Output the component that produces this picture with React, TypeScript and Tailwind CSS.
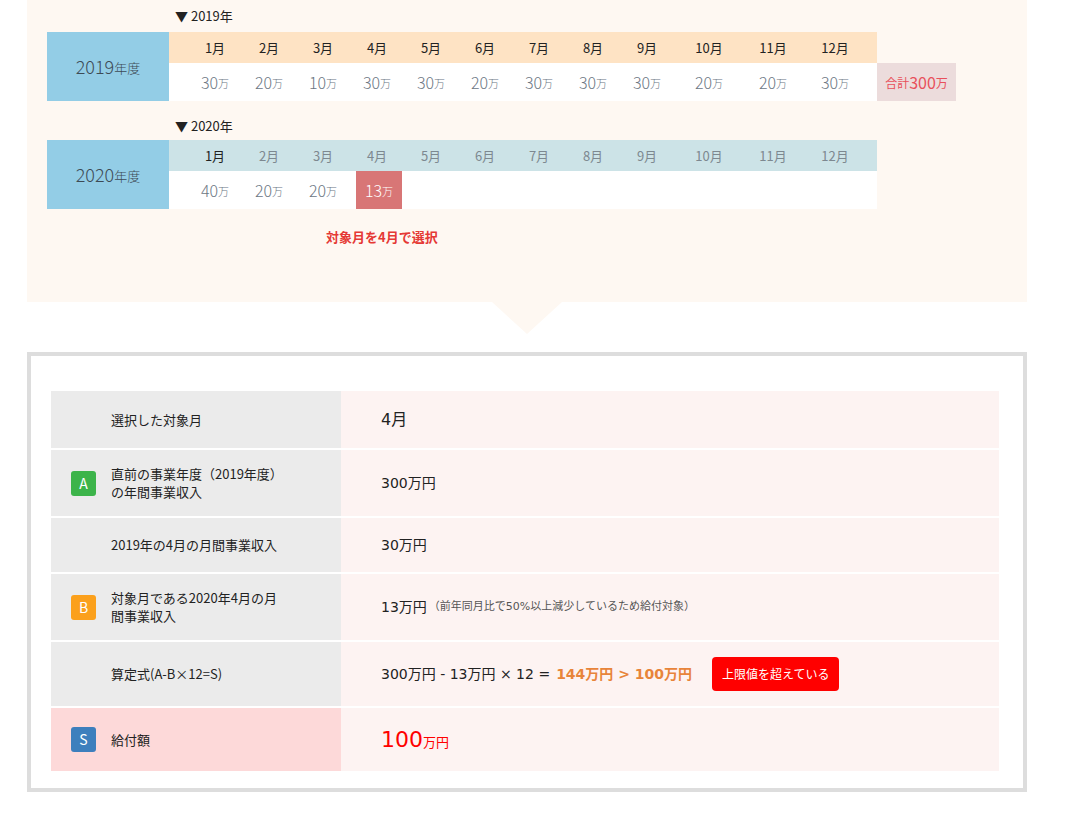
const MONTHS = ["1月", "2月", "3月", "4月", "5月", "6月", "7月", "8月", "9月", "10月", "11月", "12月"];
const COLS = "grid-cols-[54px_54px_54px_54px_54px_54px_54px_54px_54px_70px_58px_66px]";

function YearTable({
  year,
  values,
  head,
  current,
}: {
  year: string;
  values: string[];
  head: string;
  current?: boolean;
}) {
  return (
    <div className="flex">
      <div className="w-[122px] bg-[#93cde6] flex items-center justify-center text-[#3d4a55] font-light">
        <span className="text-[18px]">{year}</span>
        <span className="text-[13px] mt-[3px]">年度</span>
      </div>
      <div className="w-[708px]">
        <div className={`h-[31px] ${head} pl-[19px] grid ${COLS} items-center text-[13px]`}>
          {MONTHS.map((m, i) => (
            <div key={m} className={`text-center ${current && i > 0 ? "text-[#7d8890]" : "text-[#222]"}`}>
              {m}
            </div>
          ))}
        </div>
        <div className={`h-[38px] bg-white pl-[19px] grid ${COLS} items-stretch font-light`}>
          {values.map((v, i) =>
            current && i === 3 ? (
              <div key={i} className="flex justify-center">
                <div className="w-[46px] bg-[#d87676] text-white flex items-center justify-center ml-[4px]">
                  <span className="text-[16px]">{v}</span>
                  <span className="text-[11px] mt-[3px]">万</span>
                </div>
              </div>
            ) : (
              <div key={i} className="flex items-center justify-center text-[#6b7683]">
                <span className="text-[16px]">{v}</span>
                <span className="text-[11px] mt-[3px]">万</span>
              </div>
            )
          )}
        </div>
      </div>
    </div>
  );
}

function Badge({ letter, color }: { letter: string; color: string }) {
  return (
    <div className={`w-[25px] h-[25px] rounded-[3px] ${color} text-white text-[14px] flex items-center justify-center`}>
      {letter}
    </div>
  );
}

function Row({
  h,
  badge,
  label,
  children,
  leftBg = "bg-[#ebebeb]",
}: {
  h: string;
  badge?: React.ReactNode;
  label: React.ReactNode;
  children: React.ReactNode;
  leftBg?: string;
}) {
  return (
    <div className={`flex ${h}`}>
      <div className={`w-[290px] ${leftBg} flex items-center pl-[20px]`}>
        <div className="w-[40px] shrink-0">{badge}</div>
        <div className="text-[13px] leading-[18px] text-[#222]">{label}</div>
      </div>
      <div
        className="flex-1 bg-[#fdf3f2] flex items-center pl-[40px] text-[14px] text-[#222]"
        style={{ fontFamily: '"DejaVu Sans", "Noto Sans CJK JP", sans-serif' }}
      >
        {children}
      </div>
    </div>
  );
}

export default function App() {
  return (
    <div className="w-[1065px] bg-white pb-[21px]" style={{ fontFamily: '"Noto Sans CJK JP", "Noto Sans", sans-serif' }}>
      <div className="ml-[27px] w-[1000px] h-[302px] bg-[#fef8f2] pl-[20px] pt-[6px]">
        <div className="pl-[128px] text-[13px] text-[#222] h-[26px]">▼ 2019年</div>
        <div className="flex">
          <YearTable year="2019" values={["30", "20", "10", "30", "30", "20", "30", "30", "30", "20", "20", "30"]} head="bg-[#fee3c4]" />
          <div className="self-end h-[38px] w-[79px] bg-[#ecdcdc] text-[#e8505b] flex items-center justify-center">
            <span className="text-[12px] mt-[2px]">合計</span>
            <span className="text-[16px]">300</span>
            <span className="text-[12px] mt-[2px]">万</span>
          </div>
        </div>
        <div className="pl-[128px] text-[13px] text-[#222] mt-[15px] h-[24px]">▼ 2020年</div>
        <YearTable year="2020" values={["40", "20", "20", "13"]} head="bg-[#cce3e7]" current />
        <div className="pl-[279px] mt-[18px] text-[13px] font-bold text-[#e53935]">対象月を4月で選択</div>
      </div>
      <div className="flex justify-center w-[1000px] ml-[27px]">
        <div className="w-0 h-0 border-l-[35px] border-r-[35px] border-t-[32px] border-l-transparent border-r-transparent border-t-[#fef8f2]" />
      </div>
      <div className="ml-[27px] mt-[18px] w-[1000px] border-4 border-[#dddddd] pl-[20px] pr-[24px] pt-[35px] pb-[17px]">
        <div className="flex flex-col gap-[2px]">
          <Row h="h-[57px]" label="選択した対象月">
            <span className="text-[16px]">4月</span>
          </Row>
          <Row h="h-[66px]" badge={<Badge letter="A" color="bg-[#3cb44a]" />} label={<>直前の事業年度（2019年度）<br />の年間事業収入</>}>
            300万円
          </Row>
          <Row h="h-[54px]" label="2019年の4月の月間事業収入">
            30万円
          </Row>
          <Row h="h-[66px]" badge={<Badge letter="B" color="bg-[#fba01b]" />} label={<>対象月である2020年4月の月<br />間事業収入</>}>
            13万円
            <span className="text-[11px] text-[#555] ml-[2px]">（前年同月比で50%以上減少しているため給付対象）</span>
          </Row>
          <Row h="h-[64px]" label="算定式(A-B×12=S)">
            300万円 - 13万円 × 12 =
            <span className="ml-[6px] font-bold text-[#e8843a]">144万円 &gt; 100万円</span>
            <span className="ml-[20px] bg-[#ff0000] text-white text-[12px] rounded-[4px] px-[10px] h-[34px] flex items-center" style={{ fontFamily: '"Noto Sans CJK JP", sans-serif' }}>
              上限値を超えている
            </span>
          </Row>
          <Row h="h-[63px]" leftBg="bg-[#fdd9d9]" badge={<Badge letter="S" color="bg-[#3d7fbd]" />} label="給付額">
            <span className="text-[22px] text-[#ff0000]">100</span>
            <span className="text-[13px] text-[#ff0000] mt-[6px]">万円</span>
          </Row>
        </div>
      </div>
    </div>
  );
}
